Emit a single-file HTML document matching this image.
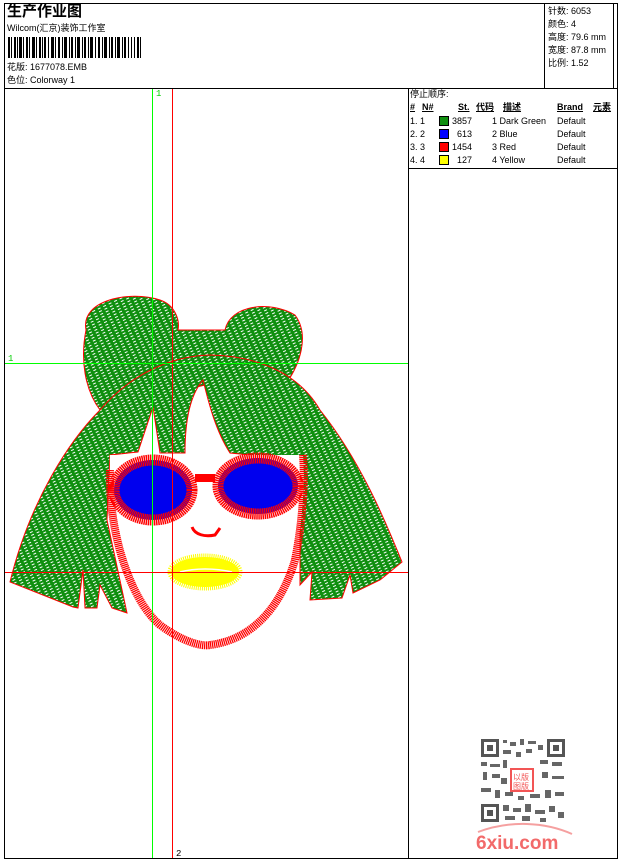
<!DOCTYPE html>
<html><head><meta charset="utf-8"><style>
body{margin:0;width:620px;height:860px;background:#fff;position:relative;overflow:hidden;font-family:"Liberation Sans","Noto Sans CJK SC",sans-serif;font-size:9px;color:#000}
.a{position:absolute;white-space:nowrap;line-height:11px}
.b{position:absolute;background:#000}
.u{text-decoration:underline;font-weight:bold}
.sw{position:absolute;width:8px;height:8px;border:1px solid #000}
</style></head><body>
<div class="b" style="left:4px;top:3px;width:614px;height:1px"></div>
<div class="b" style="left:4px;top:858px;width:614px;height:1px"></div>
<div class="b" style="left:4px;top:3px;width:1px;height:856px"></div>
<div class="b" style="left:617px;top:3px;width:1px;height:856px"></div>
<div class="b" style="left:4px;top:88px;width:614px;height:1px"></div>
<div class="b" style="left:544px;top:3px;width:1px;height:86px"></div>
<div class="b" style="left:613px;top:3px;width:1px;height:86px"></div>
<div class="b" style="left:408px;top:88px;width:1px;height:771px"></div>
<div class="b" style="left:408px;top:168px;width:210px;height:1px"></div>

<div class="a" style="left:7px;top:3px;font-size:15px;line-height:17px;font-weight:bold">生产作业图</div>
<div class="a" style="left:7px;top:23px">Wilcom(汇京)装饰工作室</div>
<svg style="position:absolute;left:8px;top:37px" width="134" height="21">
<g fill="#000">
<rect x="0" width="2" height="21"/><rect x="3" width="1" height="21"/><rect x="6" width="2" height="21"/><rect x="9" width="1" height="21"/><rect x="11" width="3" height="21"/><rect x="15" width="1" height="21"/><rect x="18" width="2" height="21"/><rect x="21" width="1" height="21"/><rect x="24" width="3" height="21"/><rect x="28" width="1" height="21"/><rect x="31" width="2" height="21"/><rect x="34" width="1" height="21"/><rect x="36" width="2" height="21"/><rect x="40" width="1" height="21"/><rect x="43" width="3" height="21"/><rect x="47" width="1" height="21"/><rect x="50" width="2" height="21"/><rect x="54" width="1" height="21"/><rect x="56" width="3" height="21"/><rect x="61" width="1" height="21"/><rect x="63" width="2" height="21"/><rect x="67" width="1" height="21"/><rect x="69" width="3" height="21"/><rect x="74" width="1" height="21"/><rect x="76" width="2" height="21"/><rect x="80" width="1" height="21"/><rect x="82" width="3" height="21"/><rect x="87" width="1" height="21"/><rect x="90" width="2" height="21"/><rect x="94" width="1" height="21"/><rect x="96" width="3" height="21"/><rect x="101" width="1" height="21"/><rect x="103" width="2" height="21"/><rect x="107" width="1" height="21"/><rect x="109" width="3" height="21"/><rect x="114" width="1" height="21"/><rect x="116" width="2" height="21"/><rect x="120" width="1" height="21"/><rect x="123" width="1" height="21"/><rect x="126" width="1" height="21"/><rect x="129" width="2" height="21"/><rect x="132" width="1" height="21"/>
</g></svg>
<div class="a" style="left:7px;top:62px">花版: 1677078.EMB</div>
<div class="a" style="left:7px;top:75px">色位: Colorway 1</div>

<div class="a" style="left:548px;top:6px">针数: 6053</div>
<div class="a" style="left:548px;top:19px">颜色: 4</div>
<div class="a" style="left:548px;top:32px">高度: 79.6 mm</div>
<div class="a" style="left:548px;top:45px">宽度: 87.8 mm</div>
<div class="a" style="left:548px;top:58px">比例: 1.52</div>

<div class="a" style="left:410px;top:89px">停止顺序:</div>
<div class="a u" style="left:410px;top:102px">#</div>
<div class="a u" style="left:422px;top:102px">N#</div>
<div class="a u" style="left:458px;top:102px">St.</div>
<div class="a u" style="left:476px;top:102px">代码</div>
<div class="a u" style="left:503px;top:102px">描述</div>
<div class="a u" style="left:557px;top:102px">Brand</div>
<div class="a u" style="left:593px;top:102px">元素</div>

<div class="a" style="left:410px;top:116px">1. 1</div><div class="sw" style="left:439px;top:116px;background:#109010"></div><div class="a" style="left:450px;top:116px;width:22px;text-align:right">3857</div><div class="a" style="left:492px;top:116px">1 Dark Green</div><div class="a" style="left:557px;top:116px">Default</div>
<div class="a" style="left:410px;top:129px">2. 2</div><div class="sw" style="left:439px;top:129px;background:#0000ff"></div><div class="a" style="left:450px;top:129px;width:22px;text-align:right">613</div><div class="a" style="left:492px;top:129px">2 Blue</div><div class="a" style="left:557px;top:129px">Default</div>
<div class="a" style="left:410px;top:142px">3. 3</div><div class="sw" style="left:439px;top:142px;background:#ff0000"></div><div class="a" style="left:450px;top:142px;width:22px;text-align:right">1454</div><div class="a" style="left:492px;top:142px">3 Red</div><div class="a" style="left:557px;top:142px">Default</div>
<div class="a" style="left:410px;top:155px">4. 4</div><div class="sw" style="left:439px;top:155px;background:#ffff00"></div><div class="a" style="left:450px;top:155px;width:22px;text-align:right">127</div><div class="a" style="left:492px;top:155px">4 Yellow</div><div class="a" style="left:557px;top:155px">Default</div>

<svg style="position:absolute;left:0;top:0" width="620" height="860">
<defs>
<pattern id="h" width="6" height="3" patternUnits="userSpaceOnUse" patternTransform="rotate(-25)">
<rect width="6" height="3" fill="#0f8f0f"/><rect width="3" height="1" fill="#fff"/>
</pattern>
</defs>
<g stroke="#ff0000" stroke-width="1" fill="url(#h)">
<path d="M86,330 C80,300 130,290 160,300 C175,305 180,320 178,330 L225,330 C230,305 270,300 295,315 C310,335 300,365 285,385 L205,385 L100,410 C85,390 80,360 86,330 Z"/>
<path d="M10,582 C30,500 70,440 100,410 C130,375 170,356 210,355 C260,356 300,375 320,410 C360,460 385,520 402,562 L380,580 L353,593 L350,575 L342,598 L310,600 L312,572 L300,585 L300,460 L230,453 C215,430 208,400 203,380 C190,395 185,420 185,453 L160,453 L153,407 L138,452 L110,455 L107,520 L127,613 L112,608 L100,585 L97,608 L85,608 L83,570 L78,608 L73,607 Z"/>
</g>
<path d="M110,455 C108,530 130,600 160,625 C180,640 200,647 210,645 C250,640 280,610 295,560 C303,520 305,480 303,455 Z" fill="#fff"/>
<path d="M110,470 C108,530 130,600 160,625 C180,640 200,647 210,645 C250,640 280,610 295,560 C303,520 305,480 303,455" fill="none" stroke="#ff0000" stroke-width="8" stroke-dasharray="1.3 0.7"/>
<ellipse cx="153" cy="490" rx="39" ry="30" fill="#0000ee" stroke="#ff0000" stroke-width="11" stroke-dasharray="1.4 0.6"/>
<ellipse cx="258" cy="486" rx="40" ry="28" fill="#0000ee" stroke="#ff0000" stroke-width="11" stroke-dasharray="1.4 0.6"/>
<rect x="195" y="474" width="20" height="8" fill="#ff0000"/>
<path d="M192,527 C195,535 205,537 215,535 L220,528" fill="none" stroke="#ff0000" stroke-width="3"/>
<ellipse cx="205" cy="572" rx="34" ry="15" fill="#ffff00" stroke="#ffff00" stroke-width="7" stroke-dasharray="1 1"/>
<path d="M180,572 C195,568 215,568 232,572" stroke="#fff" stroke-width="1.5" fill="none"/>
<rect x="152" y="89" width="1" height="769" fill="#00ff00"/>
<rect x="172" y="89" width="1" height="769" fill="#ff0000"/>
<rect x="5" y="363" width="403" height="1" fill="#00ff00"/>
<rect x="5" y="572" width="403" height="1" fill="#ff0000"/>
<text x="156" y="96" font-size="9" fill="#00cc00" font-family="Liberation Mono">1</text>
<text x="8" y="361" font-size="9" fill="#00cc00" font-family="Liberation Mono">1</text>
<text x="176" y="856" font-size="9" fill="#000" font-family="Liberation Mono">2</text>
<g fill="#555">
<rect x="481" y="739" width="18" height="18"/><rect x="547" y="739" width="18" height="18"/><rect x="481" y="804" width="18" height="18"/>
</g>
<g fill="#fff"><rect x="484" y="742" width="12" height="12"/><rect x="550" y="742" width="12" height="12"/><rect x="484" y="807" width="12" height="12"/></g>
<g fill="#555"><rect x="487" y="745" width="6" height="6"/><rect x="553" y="745" width="6" height="6"/><rect x="487" y="810" width="6" height="6"/></g>
<g fill="#666">
<rect x="503" y="740" width="4" height="3"/><rect x="510" y="742" width="6" height="4"/><rect x="520" y="739" width="4" height="6"/><rect x="528" y="741" width="8" height="3"/><rect x="538" y="745" width="5" height="5"/><rect x="503" y="750" width="8" height="4"/><rect x="516" y="752" width="5" height="5"/><rect x="526" y="749" width="6" height="4"/>
<rect x="481" y="762" width="6" height="4"/><rect x="490" y="764" width="10" height="3"/><rect x="503" y="760" width="4" height="8"/><rect x="540" y="760" width="8" height="4"/><rect x="552" y="762" width="10" height="4"/>
<rect x="483" y="772" width="4" height="8"/><rect x="492" y="774" width="8" height="4"/><rect x="501" y="778" width="6" height="6"/><rect x="542" y="772" width="6" height="6"/><rect x="552" y="776" width="12" height="3"/>
<rect x="481" y="788" width="10" height="4"/><rect x="495" y="790" width="5" height="8"/><rect x="505" y="792" width="8" height="4"/><rect x="518" y="796" width="6" height="4"/><rect x="530" y="794" width="10" height="4"/><rect x="545" y="790" width="6" height="8"/><rect x="555" y="792" width="9" height="4"/>
<rect x="503" y="805" width="6" height="6"/><rect x="513" y="808" width="8" height="4"/><rect x="525" y="804" width="6" height="8"/><rect x="535" y="810" width="10" height="4"/><rect x="549" y="806" width="6" height="6"/><rect x="558" y="812" width="6" height="6"/><rect x="505" y="816" width="10" height="4"/><rect x="522" y="816" width="8" height="5"/><rect x="540" y="818" width="6" height="4"/>
</g>
<rect x="511" y="769" width="22" height="22" fill="#fff" stroke="#f25555" stroke-width="2"/>
<text x="513" y="780" font-size="8" fill="#f25555" font-family="Noto Sans CJK SC">以版</text>
<text x="513" y="789" font-size="8" fill="#f25555" font-family="Noto Sans CJK SC">图版</text>
<path d="M478,832 C510,820 545,822 572,834" stroke="#f5a0a0" stroke-width="2" fill="none"/>
<text x="476" y="849" font-size="19" font-weight="bold" fill="#f26a6a" font-family="Liberation Sans">6xiu.com</text>
</svg>
</body></html>
